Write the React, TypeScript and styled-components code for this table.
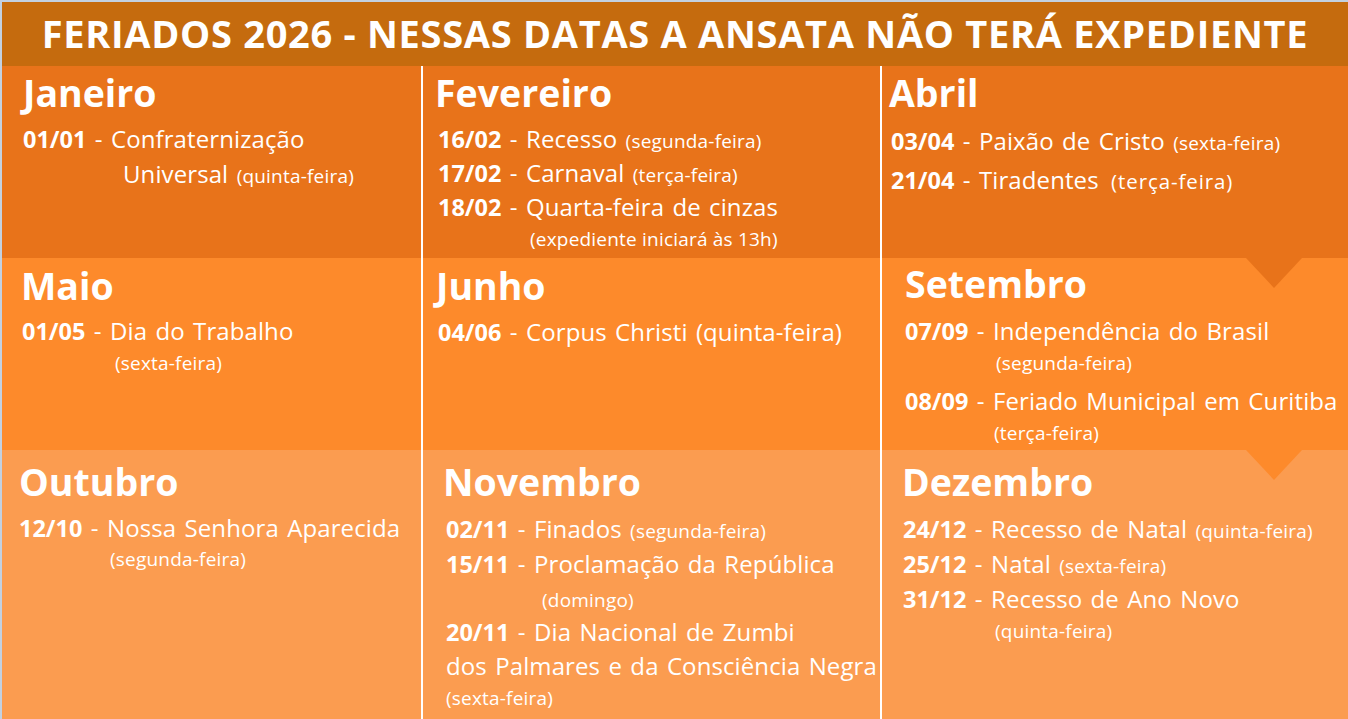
import React from "react";
import styled, { createGlobalStyle } from "styled-components";

const Global = createGlobalStyle`
  html, body { margin: 0; padding: 0; background: #ffffff; }
  body { width: 1348px; height: 719px; overflow: hidden; font-family: "Open Sans", "Noto Sans", "Liberation Sans", sans-serif; }
`;

const ROW_BG = ["#e8731a", "#fd8a2b", "#fb9c50"];

const Page = styled.div`
  width: 1348px;
  height: 719px;
  box-sizing: border-box;
  border-top: 2px solid #c3d1e1;
  border-left: 2px solid #c3d1e1;
  display: flex;
  flex-direction: column;
  overflow: hidden;
`;

const Header = styled.header`
  height: 64px;
  flex: none;
  background: #c56b0e;
  display: flex;
  align-items: center;
  justify-content: center;
  color: #ffffff;
  font-family: "Open Sans", "Noto Sans", sans-serif;
  font-weight: 700;
  font-size: 38px;
  letter-spacing: 0.7px;
  white-space: nowrap;
  padding-bottom: 3px;
  box-sizing: border-box;
`;

const Grid = styled.main`
  flex: 1;
  display: grid;
  grid-template-columns: 419px 459px 1fr;
  grid-template-rows: 192px 192px 1fr;
`;

const Cell = styled.section<{ $row: number; $col: number; $pad: number; $top: number }>`
  position: relative;
  background: ${(p) => ROW_BG[p.$row]};
  border-left: ${(p) => (p.$col > 0 ? "2px solid #ffffff" : "none")};
  padding: ${(p) => `${p.$top}px 0 0 ${p.$pad}px`};
  color: #ffffff;
  display: flex;
  flex-direction: column;
  min-width: 0;
`;

const Notch = styled.span<{ $row: number }>`
  position: absolute;
  top: 0;
  right: 46px;
  width: 0;
  height: 0;
  border-left: 28px solid transparent;
  border-right: 28px solid transparent;
  border-top: 30px solid ${(p) => ROW_BG[p.$row - 1]};
`;

const MonthTitle = styled.h2`
  margin: 0 0 9px 0;
  font-family: "Open Sans", "Noto Sans", sans-serif;
  font-weight: 700;
  font-size: 37.5px;
  line-height: 40px;
  letter-spacing: 0;
  position: relative;
  z-index: 1;
`;

const List = styled.div<{ $shift: number }>`
  display: flex;
  flex-direction: column;
  padding-left: ${(p) => p.$shift}px;
`;

const Line = styled.div<{ $indent?: number; $gap?: number }>`
  font-size: 24px;
  line-height: 34px;
  font-weight: 400;
  letter-spacing: 0.1px;
  word-spacing: 2px;
  white-space: nowrap;
  padding-left: ${(p) => p.$indent ?? 0}px;
  margin-top: ${(p) => p.$gap ?? 0}px;
`;

const NoteLine = styled.div<{ $indent: number; $gap?: number }>`
  font-size: 19px;
  line-height: 30px;
  letter-spacing: 0.2px;
  white-space: nowrap;
  padding-left: ${(p) => p.$indent}px;
  margin-top: ${(p) => p.$gap ?? 0}px;
`;

const DateText = styled.b`
  font-weight: 700;
  font-size: 23.5px;
  line-height: 1;
  letter-spacing: 0;
`;

const Note = styled.span<{ $big?: boolean }>`
  font-size: ${(p) => (p.$big ? "20.5px" : "19px")};
  line-height: 1;
  letter-spacing: ${(p) => (p.$big ? "0.9px" : "0.2px")};
  margin-left: ${(p) => (p.$big ? "4px" : "0")};
  word-spacing: 0;
`;

type Item =
  | { t: "entry"; date: string; desc: string; note?: string; big?: boolean; gap?: number }
  | { t: "cont"; desc: string; note?: string; indent: number; gap?: number }
  | { t: "note"; text: string; indent: number; gap?: number };

type Month = {
  name: string;
  row: number;
  col: number;
  pad: number;
  top: number;
  shift: number;
  notch?: boolean;
  items: Item[];
};

const MONTHS: Month[] = [
  {
    name: "Janeiro", row: 0, col: 0, pad: 21, top: 7, shift: 0,
    items: [
      { t: "entry", date: "01/01", desc: "Confraternização" },
      { t: "cont", desc: "Universal", note: "(quinta-feira)", indent: 100, gap: 1 },
    ],
  },
  {
    name: "Fevereiro", row: 0, col: 1, pad: 12, top: 7, shift: 3,
    items: [
      { t: "entry", date: "16/02", desc: "Recesso", note: "(segunda-feira)" },
      { t: "entry", date: "17/02", desc: "Carnaval", note: "(terça-feira)" },
      { t: "entry", date: "18/02", desc: "Quarta-feira de cinzas" },
      { t: "note", text: "(expediente iniciará às 13h)", indent: 92 },
    ],
  },
  {
    name: "Abril", row: 0, col: 2, pad: 7, top: 7, shift: 2,
    items: [
      { t: "entry", date: "03/04", desc: "Paixão de Cristo", note: "(sexta-feira)", gap: 2 },
      { t: "entry", date: "21/04", desc: "Tiradentes", note: "(terça-feira)", big: true, gap: 5 },
    ],
  },
  {
    name: "Maio", row: 1, col: 0, pad: 19, top: 8, shift: 1,
    items: [
      { t: "entry", date: "01/05", desc: "Dia do Trabalho", gap: -1 },
      { t: "note", text: "(sexta-feira)", indent: 93 },
    ],
  },
  {
    name: "Junho", row: 1, col: 1, pad: 13, top: 8, shift: 2,
    items: [{ t: "entry", date: "04/06", desc: "Corpus Christi (quinta-feira)" }],
  },
  {
    name: "Setembro", row: 1, col: 2, pad: 23, top: 6, shift: 0, notch: true,
    items: [
      { t: "entry", date: "07/09", desc: "Independência do Brasil", gap: 1 },
      { t: "note", text: "(segunda-feira)", indent: 91 },
      { t: "entry", date: "08/09", desc: "Feriado Municipal em Curitiba", gap: 6 },
      { t: "note", text: "(terça-feira)", indent: 89 },
    ],
  },
  {
    name: "Outubro", row: 2, col: 0, pad: 17, top: 12, shift: 0,
    items: [
      { t: "entry", date: "12/10", desc: "Nossa Senhora Aparecida" },
      { t: "note", text: "(segunda-feira)", indent: 91, gap: -1 },
    ],
  },
  {
    name: "Novembro", row: 2, col: 1, pad: 20, top: 12, shift: 3,
    items: [
      { t: "entry", date: "02/11", desc: "Finados", note: "(segunda-feira)", gap: 1 },
      { t: "entry", date: "15/11", desc: "Proclamação da República", gap: 1 },
      { t: "note", text: "(domingo)", indent: 96, gap: 4 },
      { t: "entry", date: "20/11", desc: "Dia Nacional de Zumbi", gap: 0 },
      { t: "cont", desc: "dos Palmares e da Consciência Negra", indent: -1 },
      { t: "note", text: "(sexta-feira)", indent: -1 },
    ],
  },
  {
    name: "Dezembro", row: 2, col: 2, pad: 20, top: 12, shift: 1, notch: true,
    items: [
      { t: "entry", date: "24/12", desc: "Recesso de Natal", note: "(quinta-feira)", gap: 1 },
      { t: "entry", date: "25/12", desc: "Natal", note: "(sexta-feira)", gap: 1 },
      { t: "entry", date: "31/12", desc: "Recesso de Ano Novo", gap: 1 },
      { t: "note", text: "(quinta-feira)", indent: 92 },
    ],
  },
];

function renderItem(item: Item, i: number) {
  if (item.t === "entry") {
    return (
      <Line key={i} $gap={item.gap}>
        <DateText>{item.date}</DateText> - {item.desc}
        {item.note ? <> <Note $big={item.big}>{item.note}</Note></> : null}
      </Line>
    );
  }
  if (item.t === "cont") {
    return (
      <Line key={i} $indent={item.indent} $gap={item.gap}>
        {item.desc}
        {item.note ? <> <Note>{item.note}</Note></> : null}
      </Line>
    );
  }
  return (
    <NoteLine key={i} $indent={item.indent} $gap={item.gap}>
      {item.text}
    </NoteLine>
  );
}

export default function App() {
  return (
    <>
      <Global />
      <Page>
        <Header>FERIADOS 2026 - NESSAS DATAS A ANSATA NÃO TERÁ EXPEDIENTE</Header>
        <Grid>
          {MONTHS.map((m) => (
            <Cell key={m.name} $row={m.row} $col={m.col} $pad={m.pad} $top={m.top}>
              {m.notch ? <Notch $row={m.row} /> : null}
              <MonthTitle>{m.name}</MonthTitle>
              <List $shift={m.shift}>{m.items.map(renderItem)}</List>
            </Cell>
          ))}
        </Grid>
      </Page>
    </>
  );
}
